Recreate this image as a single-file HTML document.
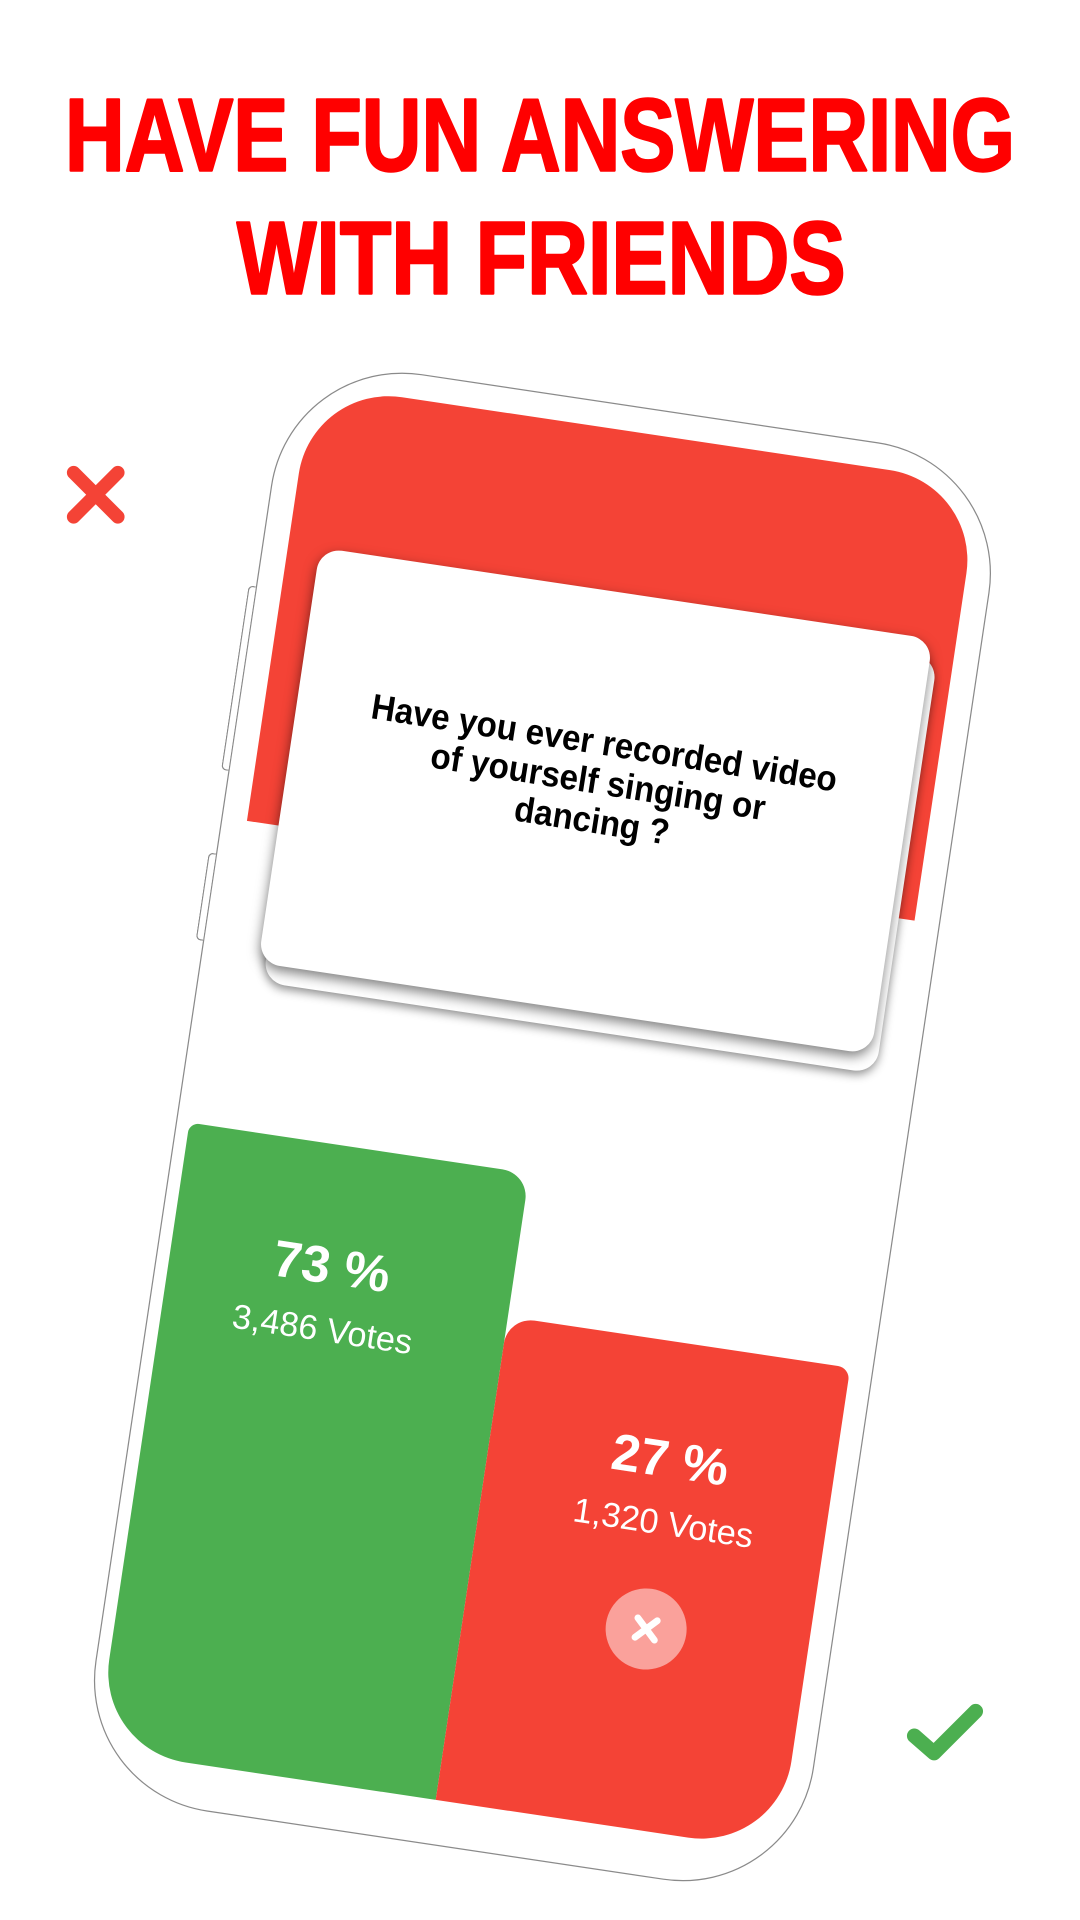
<!DOCTYPE html>
<html><head><meta charset="utf-8"><style>
html,body{margin:0;padding:0;background:#fff;overflow:hidden}
#root{position:absolute;left:0;top:0;width:880px;height:1564px;transform:scale(1.22727,1.2276);transform-origin:0 0;font-family:"Liberation Sans",sans-serif}
.phone{position:absolute;left:146px;top:326px;width:592px;height:1184px;border:1.3px solid #8a8a8a;border-radius:108px;background:#fff;transform:rotate(8.5deg);box-sizing:border-box}
.abs{position:absolute}
.hdr{left:20px;top:20px;width:550px;height:360px;background:#f44336;border-radius:74px 74px 0 0}
.card{width:505px;height:342px;background:#fff;border-radius:18px}
.c1{left:52px;top:166px;box-shadow:0 3px 8px rgba(0,0,0,.45)}
.c2{left:46px;top:151px;box-shadow:0 4px 10px rgba(0,0,0,.5);display:flex;align-items:center;justify-content:center;text-align:center}
.q{font-weight:bold;font-size:29px;line-height:32px;color:#000;transform:rotate(0.5deg) scaleX(.93);margin-top:-30px;white-space:nowrap;flex:none}
.g{left:10px;top:630px;width:280px;height:516px;background:#4caf50;border-radius:8px 22px 0 74px}
.r{left:290px;top:748px;width:282px;height:398px;background:#f44336;border-radius:22px 10px 74px 0}
.t{color:#fff;text-align:center;width:260px}
.p{font-weight:bold;font-size:42px}
.v{font-size:28px}
.btn{border:1.3px solid #8a8a8a;border-right:none;width:5px;border-radius:4px 0 0 4px;background:#fff}
</style></head><body><div id="root">
<svg class="abs" style="left:0;top:0" width="880" height="260">
<g fill="#ff0000" font-family="Liberation Sans,sans-serif" font-weight="bold" font-size="84" stroke="#ff0000" stroke-width="2" stroke-linejoin="round">
<text x="53" y="139" textLength="774" lengthAdjust="spacingAndGlyphs">HAVE FUN ANSWERING</text>
<text x="193" y="239" textLength="496" lengthAdjust="spacingAndGlyphs">WITH FRIENDS</text>
</g>
</svg>
<svg class="abs" style="left:50px;top:375px" width="60" height="60"><path d="M10 10L46 46M46 10L10 46" stroke="#f44336" stroke-width="11" stroke-linecap="round"/></svg>
<svg class="abs" style="left:735px;top:1380px" width="80" height="60"><path d="M10 34L26 48L60 14" stroke="#4caf50" stroke-width="12" stroke-linecap="round" stroke-linejoin="round" fill="none"/></svg>
<div class="phone">
 <div class="abs btn" style="left:-7px;top:190px;height:150px"></div>
 <div class="abs btn" style="left:-7px;top:410px;height:70px"></div>
 <div class="abs hdr"></div>
 <div class="abs card c1"></div>
 <div class="abs card c2"><div class="q">Have you ever recorded video<br>of yourself singing or<br>dancing ?</div></div>
 <div class="abs g"></div>
 <div class="abs r"></div>
 <div class="abs t p" style="left:12px;top:705px">73 %</div>
 <div class="abs t v" style="left:12px;top:765px">3,486 Votes</div>
 <div class="abs t p" style="left:308px;top:820px">27 %</div>
 <div class="abs t v" style="left:310px;top:880px">1,320 Votes</div>
 <div class="abs" style="left:406px;top:950px;width:66px;height:66px;border-radius:50%;background:rgba(255,255,255,.5)"></div>
 <svg class="abs" style="left:423px;top:967px" width="32" height="32"><path d="M8 8L24 24M24 8L8 24" stroke="#fff" stroke-width="5.5" stroke-linecap="round"/></svg>
</div>
</div></body></html>
